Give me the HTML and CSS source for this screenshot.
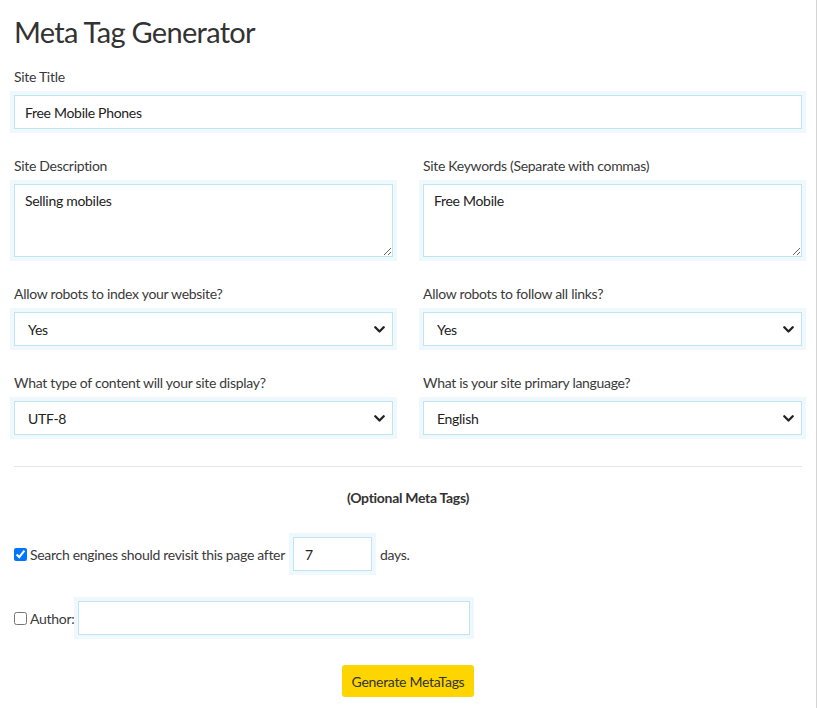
FILE: index.html
```html
<!DOCTYPE html>
<html lang="en">
<head>
<meta charset="utf-8">
<title>Meta Tag Generator</title>
<link rel="stylesheet" href="styles.css">
</head>
<body>
<div class="page">
  <h1 class="title">Meta Tag Generator</h1>

  <div class="group">
    <label class="label" for="site-title">Site Title</label>
    <input id="site-title" class="control" type="text" value="Free Mobile Phones">
  </div>

  <div class="grid">
    <div class="group">
      <label class="label" for="site-desc">Site Description</label>
      <textarea id="site-desc" class="control area">Selling mobiles</textarea>
    </div>
    <div class="group">
      <label class="label" for="site-keys">Site Keywords (Separate with commas)</label>
      <textarea id="site-keys" class="control area">Free Mobile</textarea>
    </div>
    <div class="group">
      <label class="label" for="robots-index">Allow robots to index your website?</label>
      <select id="robots-index" class="control select"><option>Yes</option><option>No</option></select>
    </div>
    <div class="group">
      <label class="label" for="robots-follow">Allow robots to follow all links?</label>
      <select id="robots-follow" class="control select"><option>Yes</option><option>No</option></select>
    </div>
    <div class="group">
      <label class="label" for="content-type">What type of content will your site display?</label>
      <select id="content-type" class="control select"><option>UTF-8</option><option>UTF-16</option></select>
    </div>
    <div class="group">
      <label class="label" for="language">What is your site primary language?</label>
      <select id="language" class="control select"><option>English</option><option>French</option></select>
    </div>
  </div>

  <hr class="rule">

  <p class="optional">(Optional Meta Tags)</p>

  <div class="check-row">
    <input type="checkbox" class="check" checked>
    <span class="check-text">Search engines should revisit this page after</span>
    <input class="control days" type="text" value="7">
    <span class="check-text">days.</span>
  </div>

  <div class="check-row">
    <input type="checkbox" class="check">
    <span class="check-text">Author:</span>
    <input class="control author" type="text">
  </div>

  <div class="actions">
    <button class="btn" type="button">Generate MetaTags</button>
  </div>
</div>
</body>
</html>
```

FILE: styles.css
```css
html, body {
  margin: 0;
  padding: 0;
  background: #ffffff;
}

body {
  font-family: "Lato", "Liberation Sans", sans-serif;
  font-size: 14px;
  line-height: 21px;
  letter-spacing: -0.3px;
  color: #3a3a3a;
}

.page {
  box-sizing: border-box;
  min-height: 100vh;
  padding: 0 14px 40px 14px;
  border-right: 1px solid #d4d4d4;
}

.title {
  margin: 0 0 15px 0;
  padding-top: 13px;
  font-size: 29px;
  line-height: 38px;
  font-weight: 400;
  letter-spacing: -0.7px;
  color: #333333;
}

.group {
  margin-bottom: 26px;
}

.label {
  display: block;
  margin-bottom: 8px;
  color: #3a3a3a;
}

.grid {
  display: grid;
  grid-template-columns: 1fr 1fr;
  column-gap: 30px;
}

.control {
  box-sizing: border-box;
  display: block;
  width: 100%;
  height: 34px;
  margin: 0;
  padding: 0 10px;
  border: 1px solid #bfe5f2;
  border-radius: 0;
  background: #ffffff;
  box-shadow: 0 0 0 4px #eff9fd;
  font-family: inherit;
  font-size: 14px;
  letter-spacing: -0.3px;
  color: #222222;
  outline: none;
}

.area {
  height: 73px;
  padding: 6px 10px;
  line-height: 20px;
  resize: vertical;
}

.select {
  appearance: none;
  -webkit-appearance: none;
  padding: 0 36px 0 13px;
  background-image: url("data:image/svg+xml,%3Csvg xmlns='http://www.w3.org/2000/svg' viewBox='0 0 11 7'%3E%3Cpath d='M1.3 1.3l4.2 4.2 4.2-4.2' fill='none' stroke='%23222' stroke-width='2.3' stroke-linecap='round' stroke-linejoin='round'/%3E%3C/svg%3E");
  background-repeat: no-repeat;
  background-size: 11px 7px;
  background-position: right 7px center;
}

.rule {
  margin: 5px 0 0 0;
  border: 0;
  border-top: 1px solid #e6e6e6;
  height: 0;
}

.optional {
  margin: 20px 0 29px 0;
  text-align: center;
  font-weight: 700;
  color: #333333;
}

.check-row {
  display: flex;
  align-items: center;
  margin-bottom: 30px;
}

.check {
  width: 13px;
  height: 13px;
  margin: 0 3px 0 0;
  flex: none;
}

.check-text {
  white-space: nowrap;
}

.days {
  width: 79px;
  padding: 0 11px;
  margin: 0 8px;
  flex: none;
}

.author {
  width: 392px;
  margin-left: 4px;
  flex: none;
}

.actions {
  display: flex;
  justify-content: center;
}

.btn {
  height: 32px;
  padding: 0 10px;
  border: 0;
  border-radius: 3px;
  background: #ffd500;
  font-family: inherit;
  font-size: 14px;
  letter-spacing: -0.3px;
  color: #333333;
  cursor: pointer;
}
```
